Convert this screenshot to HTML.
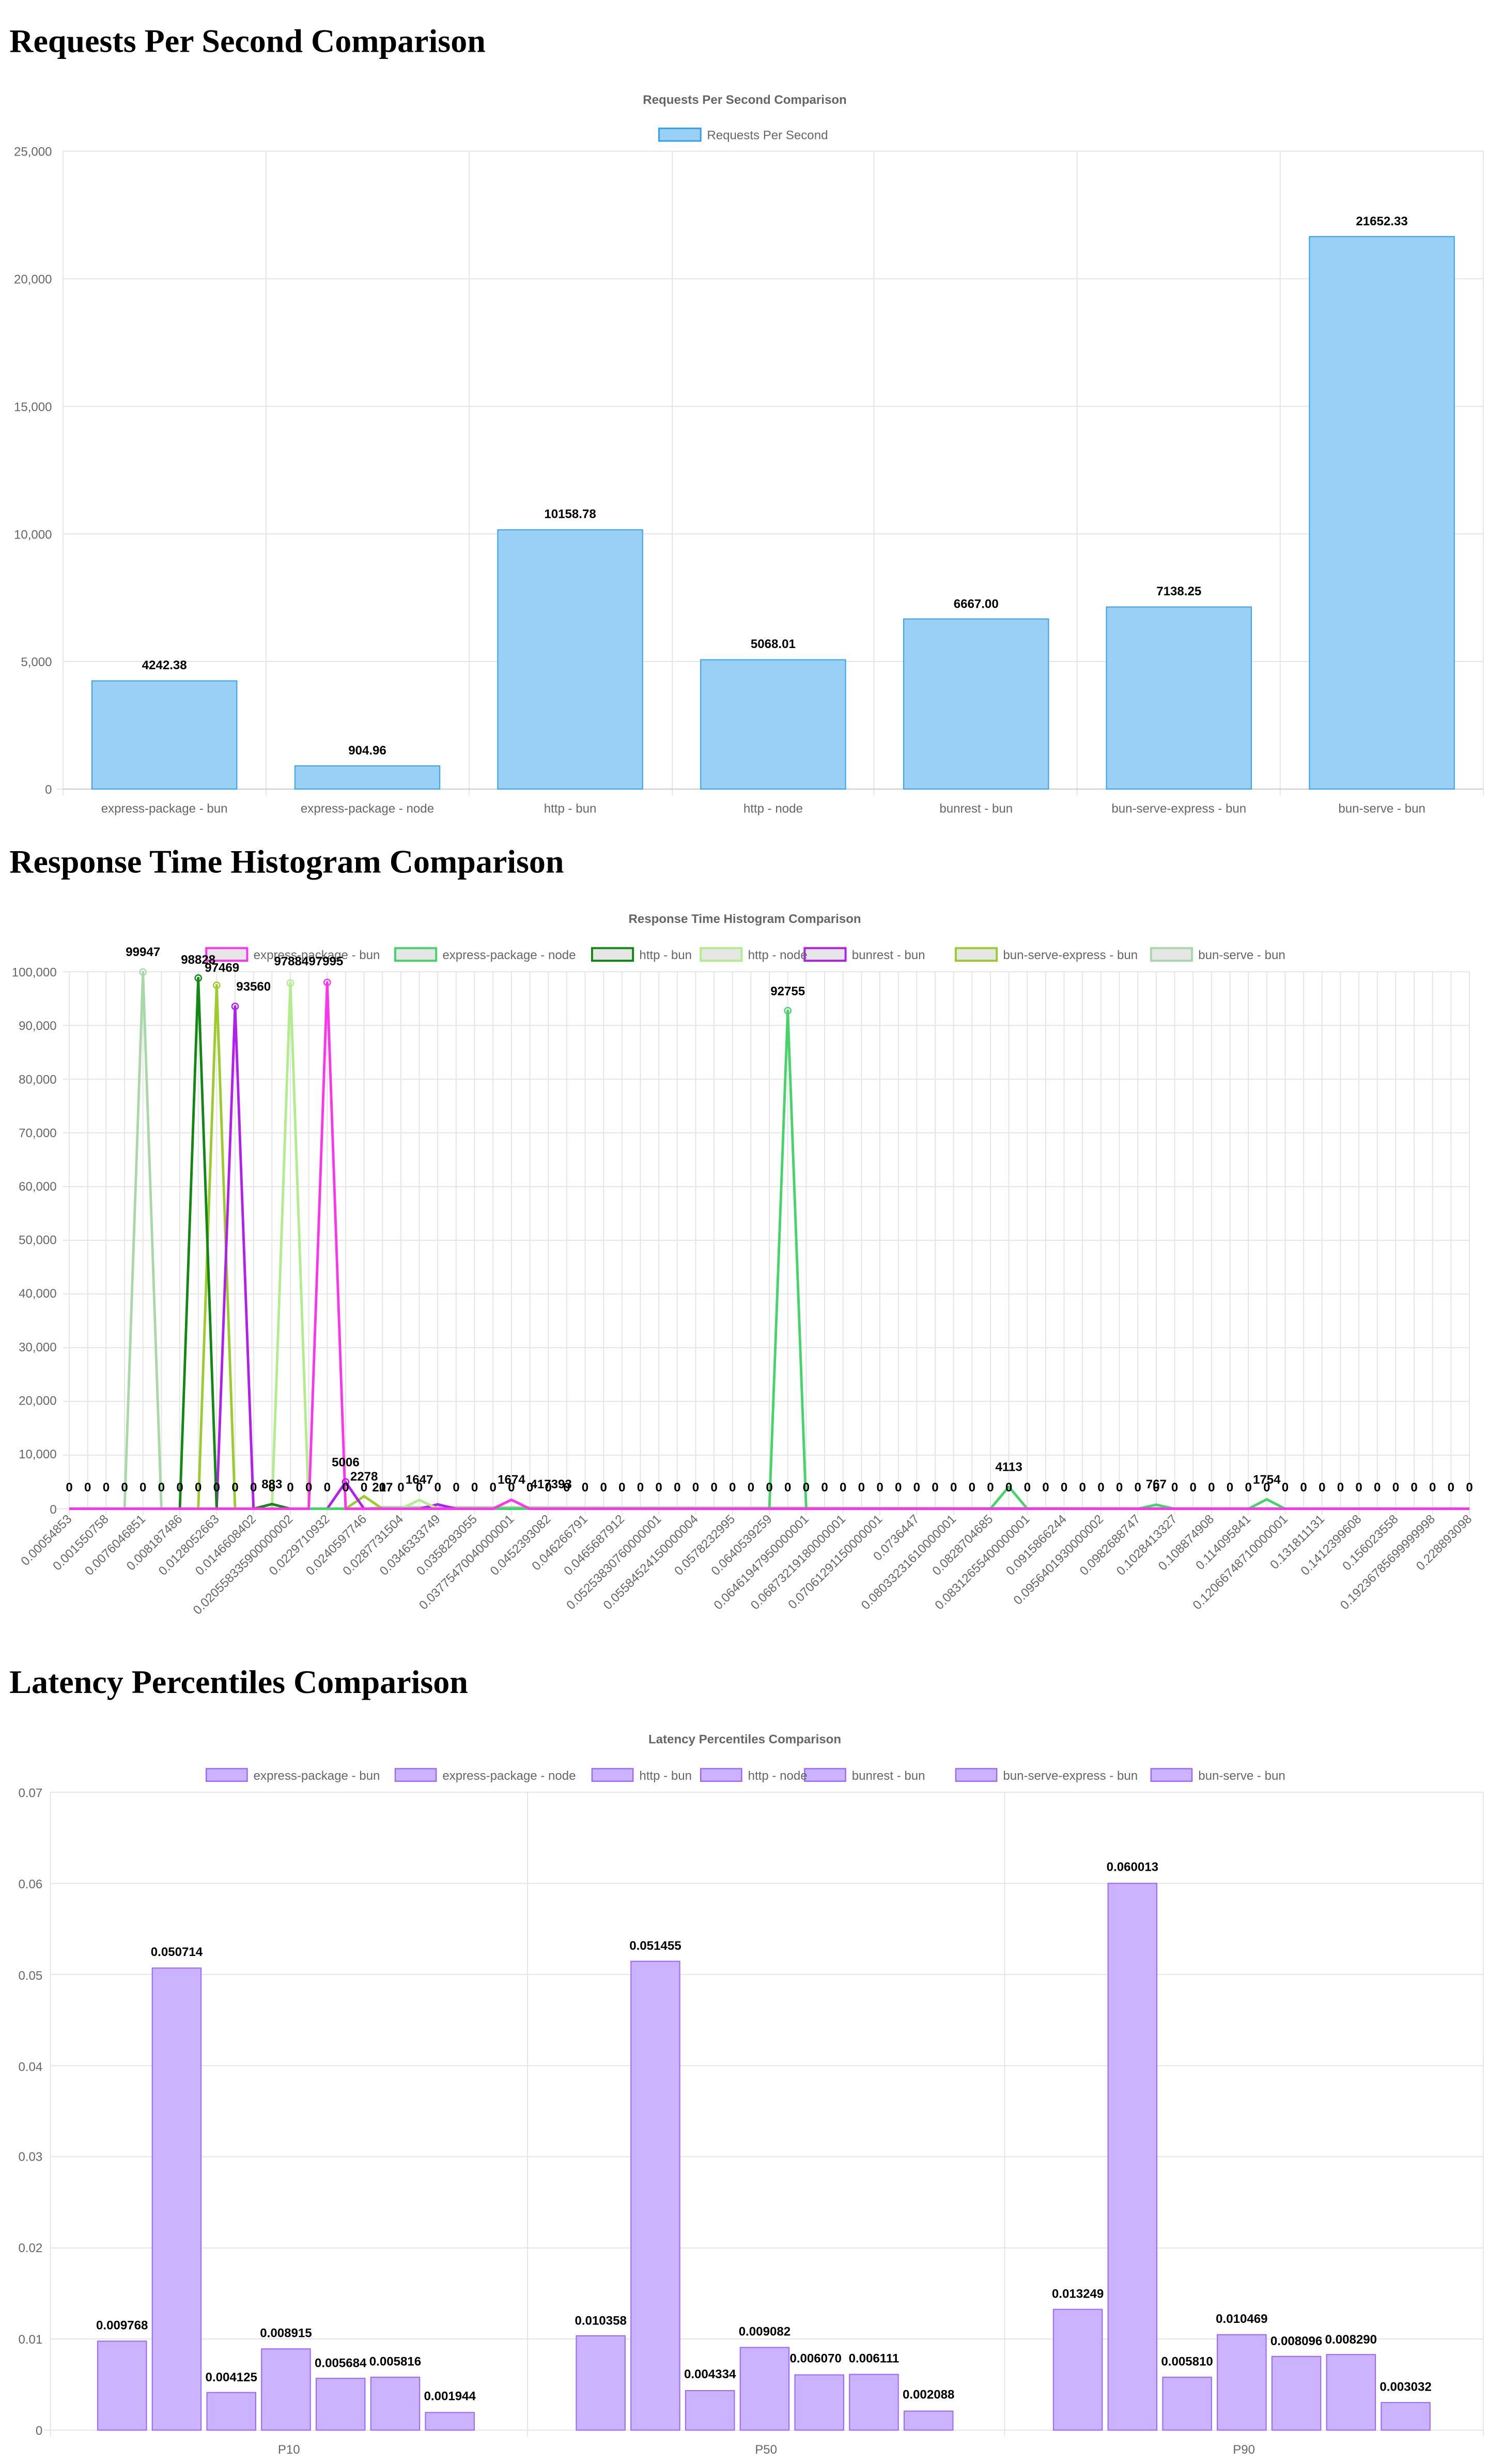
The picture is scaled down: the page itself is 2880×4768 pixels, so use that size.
<!DOCTYPE html>
<html><head><meta charset="utf-8"><style>
html,body{margin:0;padding:0;background:#fff;}
svg{display:block;}
.h{font-family:"Liberation Serif",serif;font-weight:bold;font-size:21px;fill:#000;}
.t{font-family:"Liberation Sans",sans-serif;font-weight:bold;font-size:7.9px;fill:#666;}
.l{font-family:"Liberation Sans",sans-serif;font-size:7.9px;fill:#666;}
.k{font-family:"Liberation Sans",sans-serif;font-size:7.9px;fill:#666;}
.d{font-family:"Liberation Sans",sans-serif;font-weight:bold;font-size:7.9px;fill:#000;}
.g{stroke:#e5e5e5;stroke-width:0.66;fill:none;}
</style></head><body>
<svg width="2880" height="4768" viewBox="0 0 945 1564.5" xmlns="http://www.w3.org/2000/svg">
<text class="h" x="6" y="33">Requests Per Second Comparison</text>
<text class="t" x="473" y="66" text-anchor="middle">Requests Per Second Comparison</text>
<rect x="418.5" y="81.5" width="26.5" height="8" fill="#9ad0f5" stroke="#36a2eb" stroke-width="1"/>
<text class="l" x="449" y="88.5">Requests Per Second</text>
<path class="g" d="M40 96H942M40 177H942M40 258H942M40 339H942M40 420H942M36 501H942M40 96V505M169 96V505M298 96V505M427 96V505M555 96V505M684 96V505M813 96V505M942 96V505"/>
<path d="M40 501H942" stroke="#ccc" stroke-width="0.66"/>
<g class="k" text-anchor="end">
<text x="33" y="99">25,000</text><text x="33" y="180">20,000</text><text x="33" y="261">15,000</text><text x="33" y="342">10,000</text><text x="33" y="423">5,000</text><text x="33" y="504">0</text>
</g>
<g fill="#9ad0f5" stroke="#36a2eb" stroke-width="0.66">
<rect x="58.4" y="432.3" width="92" height="68.7"/>
<rect x="187.3" y="486.3" width="92" height="14.7"/>
<rect x="316.1" y="336.4" width="92" height="164.6"/>
<rect x="445" y="418.9" width="92" height="82.1"/>
<rect x="573.9" y="393" width="92" height="108"/>
<rect x="702.7" y="385.4" width="92" height="115.6"/>
<rect x="831.6" y="150.2" width="92" height="350.8"/>
</g>
<g class="d" text-anchor="middle">
<text x="104.4" y="425">4242.38</text><text x="233.3" y="479">904.96</text><text x="362.1" y="329">10158.78</text><text x="491" y="411.5">5068.01</text><text x="619.9" y="386">6667.00</text><text x="748.7" y="378">7138.25</text><text x="877.6" y="143">21652.33</text>
</g>
<g class="k" text-anchor="middle">
<text x="104.4" y="516">express-package - bun</text><text x="233.3" y="516">express-package - node</text><text x="362.1" y="516">http - bun</text><text x="491" y="516">http - node</text><text x="619.9" y="516">bunrest - bun</text><text x="748.7" y="516">bun-serve-express - bun</text><text x="877.6" y="516">bun-serve - bun</text>
</g>

<text class="h" x="6" y="554">Response Time Histogram Comparison</text>
<text class="t" x="473" y="586" text-anchor="middle">Response Time Histogram Comparison</text>
<g stroke-width="1.3" fill="#e6e6e6">
<rect x="131" y="602" width="26" height="8" stroke="#ff33ee"/>
<rect x="251" y="602" width="26" height="8" stroke="#44d46a"/>
<rect x="376" y="602" width="26" height="8" stroke="#118811"/>
<rect x="445" y="602" width="26" height="8" stroke="#b2ec8c"/>
<rect x="511" y="602" width="26" height="8" stroke="#b31ef0"/>
<rect x="607" y="602" width="26" height="8" stroke="#9ccc2c"/>
<rect x="731" y="602" width="26" height="8" stroke="#a8d8a8"/>
</g>
<g class="l">
<text x="161" y="609">express-package - bun</text><text x="281" y="609">express-package - node</text><text x="406" y="609">http - bun</text><text x="475" y="609">http - node</text><text x="541" y="609">bunrest - bun</text><text x="637" y="609">bun-serve-express - bun</text><text x="761" y="609">bun-serve - bun</text>
</g>
<path class="g" d="M40 617H933M40 651.1H933M40 685.2H933M40 719.3H933M40 753.4H933M40 787.5H933M40 821.6H933M40 855.7H933M40 889.8H933M40 923.9H933M36 958H933
M44 617V962M55.7 617V958M67.4 617V962M79.1 617V958M90.8 617V962M102.5 617V958M114.2 617V962M125.9 617V958M137.6 617V962M149.3 617V958M161 617V962M172.7 617V958M184.4 617V962M196.1 617V958M207.8 617V962M219.5 617V958M231.2 617V962M242.9 617V958M254.6 617V962M266.3 617V958M278 617V962M289.7 617V958M301.4 617V962M313.1 617V958M324.8 617V962M336.5 617V958M348.2 617V962M359.9 617V958M371.6 617V962M383.3 617V958M395 617V962M406.7 617V958M418.4 617V962M430.1 617V958M441.8 617V962M453.5 617V958M465.2 617V962M476.9 617V958M488.6 617V962M500.3 617V958M512 617V962M523.7 617V958M535.4 617V962M547.1 617V958M558.8 617V962M570.5 617V958M582.2 617V962M593.9 617V958M605.6 617V962M617.3 617V958M629 617V962M640.7 617V958M652.4 617V962M664.1 617V958M675.8 617V962M687.5 617V958M699.2 617V962M710.9 617V958M722.6 617V962M734.3 617V958M746 617V962M757.7 617V958M769.4 617V962M781.1 617V958M792.8 617V962M804.5 617V958M816.2 617V962M827.9 617V958M839.6 617V962M851.3 617V958M863 617V962M874.7 617V958M886.4 617V962M898.1 617V958M909.8 617V962M921.5 617V958M933.2 617V962"/>
<g class="k" text-anchor="end">
<text x="36" y="620">100,000</text><text x="36" y="654">90,000</text><text x="36" y="688">80,000</text><text x="36" y="722">70,000</text><text x="36" y="756">60,000</text><text x="36" y="790">50,000</text><text x="36" y="824">40,000</text><text x="36" y="858">30,000</text><text x="36" y="892">20,000</text><text x="36" y="926">10,000</text><text x="36" y="961">0</text>
</g>
<g fill="none" stroke-width="1.6" stroke-linejoin="round">
<polyline stroke="#a8d8a8" points="44,958 79.1,958 90.8,617.2 102.5,958 223,958 231.2,958 242.9,957 933.2,958"/>
<polyline stroke="#9ccc2c" points="44,958 125.9,958 137.6,625.6 149.3,958 219.5,958 231.2,950 242.9,958 933.2,958"/>
<polyline stroke="#b31ef0" points="44,958 137.6,958 149.3,639 161,958 207.8,958 219.5,941 231.2,958 266.3,958 278,955.2 289.7,958 933.2,958"/>
<polyline stroke="#b2ec8c" points="44,958 172.7,958 184.4,624.2 196.1,958 254.6,958 266.3,952.4 278,958 933.2,958"/>
<polyline stroke="#118811" points="44,958 114.2,958 125.9,621 137.6,958 161,958 172.7,955 184.4,958 933.2,958"/>
<polyline stroke="#44d46a" points="44,958 488.6,958 500.3,641.7 512,958 629,958 640.7,944 652.4,958 722.6,958 734.3,955.4 746,958 792.8,958 804.5,952 816.2,958 933.2,958"/>
<polyline stroke="#ff33ee" points="44,958 196.1,958 207.8,623.8 219.5,958 313.1,958 324.8,952.3 336.5,958 933.2,958"/>
</g>
<g fill="none" stroke-width="0.8">
<circle cx="90.8" cy="617.2" r="2" stroke="#a8d8a8"/><circle cx="125.9" cy="621" r="2" stroke="#118811"/><circle cx="137.6" cy="625.6" r="2" stroke="#9ccc2c"/><circle cx="149.3" cy="639" r="2" stroke="#b31ef0"/><circle cx="184.4" cy="624.2" r="2" stroke="#b2ec8c"/><circle cx="207.8" cy="623.8" r="2" stroke="#ff33ee"/><circle cx="500.3" cy="641.7" r="2" stroke="#44d46a"/><circle cx="219.5" cy="941" r="2" stroke="#b31ef0"/>
</g>
<text class="d" x="44 55.7 67.4 79.1 90.8 102.5 114.2 125.9 137.6 149.3 161 172.7 184.4 196.1 207.8 219.5 231.2 242.9 254.6 266.3 278 289.7 301.4 313.1 324.8 336.5 348.2 359.9 371.6 383.3 395 406.7 418.4 430.1 441.8 453.5 465.2 476.9 488.6 500.3 512 523.7 535.4 547.1 558.8 570.5 582.2 593.9 605.6 617.3 629 640.7 652.4 664.1 675.8 687.5 699.2 710.9 722.6 734.3 746 757.7 769.4 781.1 792.8 804.5 816.2 827.9 839.6 851.3 863 874.7 886.4 898.1 909.8 921.5 933.2" y="947" text-anchor="middle">00000000000000000000000000000000000000000000000000000000000000000000000000000</text>
<g class="d" text-anchor="middle">
<text x="90.8" y="607">99947</text><text x="125.9" y="612">98828</text><text x="141" y="617">97469</text><text x="161" y="629">93560</text><text x="196" y="613">9788497995</text><text x="500.3" y="632">92755</text>
<text x="219.5" y="931">5006</text><text x="231.2" y="940">2278</text><text x="172.7" y="945">883</text><text x="266.3" y="942">1647</text><text x="324.8" y="942">1674</text><text x="640.7" y="934">4113</text><text x="804.5" y="942">1754</text><text x="734.3" y="945">767</text><text x="350" y="945">417393</text><text x="242.9" y="947">217</text>
</g>
<g class="k" text-anchor="end">
<text transform="translate(46,965) rotate(-45)">0.00054853</text>
<text transform="translate(69.4,965) rotate(-45)">0.001550758</text>
<text transform="translate(92.8,965) rotate(-45)">0.0076046851</text>
<text transform="translate(116.2,965) rotate(-45)">0.008187486</text>
<text transform="translate(139.6,965) rotate(-45)">0.0128052663</text>
<text transform="translate(163,965) rotate(-45)">0.0146608402</text>
<text transform="translate(186.4,965) rotate(-45)">0.020558335900000002</text>
<text transform="translate(209.8,965) rotate(-45)">0.0229710932</text>
<text transform="translate(233.2,965) rotate(-45)">0.0240597746</text>
<text transform="translate(256.6,965) rotate(-45)">0.0287731504</text>
<text transform="translate(280,965) rotate(-45)">0.0346333749</text>
<text transform="translate(303.4,965) rotate(-45)">0.0358293055</text>
<text transform="translate(326.8,965) rotate(-45)">0.03775470040000001</text>
<text transform="translate(350.2,965) rotate(-45)">0.0452393082</text>
<text transform="translate(373.6,965) rotate(-45)">0.046266791</text>
<text transform="translate(397,965) rotate(-45)">0.0465687912</text>
<text transform="translate(420.4,965) rotate(-45)">0.05253830760000001</text>
<text transform="translate(443.8,965) rotate(-45)">0.05584524150000004</text>
<text transform="translate(467.2,965) rotate(-45)">0.0578232995</text>
<text transform="translate(490.6,965) rotate(-45)">0.0640539259</text>
<text transform="translate(514,965) rotate(-45)">0.06461947950000001</text>
<text transform="translate(537.4,965) rotate(-45)">0.06873219180000001</text>
<text transform="translate(560.8,965) rotate(-45)">0.07061291150000001</text>
<text transform="translate(584.2,965) rotate(-45)">0.0736447</text>
<text transform="translate(607.6,965) rotate(-45)">0.08033231610000001</text>
<text transform="translate(631,965) rotate(-45)">0.0828704685</text>
<text transform="translate(654.4,965) rotate(-45)">0.08312655400000001</text>
<text transform="translate(677.8,965) rotate(-45)">0.0915866244</text>
<text transform="translate(701.2,965) rotate(-45)">0.0956401930000002</text>
<text transform="translate(724.6,965) rotate(-45)">0.0982688747</text>
<text transform="translate(748,965) rotate(-45)">0.1028413327</text>
<text transform="translate(771.4,965) rotate(-45)">0.108874908</text>
<text transform="translate(794.8,965) rotate(-45)">0.114095841</text>
<text transform="translate(818.2,965) rotate(-45)">0.12066748710000001</text>
<text transform="translate(841.6,965) rotate(-45)">0.131811131</text>
<text transform="translate(865,965) rotate(-45)">0.1412399608</text>
<text transform="translate(888.4,965) rotate(-45)">0.156023558</text>
<text transform="translate(911.8,965) rotate(-45)">0.19236785699999998</text>
<text transform="translate(935.2,965) rotate(-45)">0.228893098</text>
</g>

<text class="h" x="6" y="1075">Latency Percentiles Comparison</text>
<text class="t" x="473" y="1107" text-anchor="middle">Latency Percentiles Comparison</text>
<g stroke-width="0.8" fill="#ccb3ff" stroke="#9966ff">
<rect x="131" y="1123" width="26" height="8"/><rect x="251" y="1123" width="26" height="8"/><rect x="376" y="1123" width="26" height="8"/><rect x="445" y="1123" width="26" height="8"/><rect x="511" y="1123" width="26" height="8"/><rect x="607" y="1123" width="26" height="8"/><rect x="731" y="1123" width="26" height="8"/>
</g>
<g class="l">
<text x="161" y="1130">express-package - bun</text><text x="281" y="1130">express-package - node</text><text x="406" y="1130">http - bun</text><text x="475" y="1130">http - node</text><text x="541" y="1130">bunrest - bun</text><text x="637" y="1130">bun-serve-express - bun</text><text x="761" y="1130">bun-serve - bun</text>
</g>
<path class="g" d="M32 1138H942M32 1195.9H942M32 1253.7H942M32 1311.6H942M32 1369.4H942M32 1427.3H942M32 1485.1H942M28 1543H942M32 1138V1547M335 1138V1547M638 1138V1547M942 1138V1547"/>
<g class="k" text-anchor="end">
<text x="27" y="1141">0.07</text><text x="27" y="1199">0.06</text><text x="27" y="1257">0.05</text><text x="27" y="1315">0.04</text><text x="27" y="1372">0.03</text><text x="27" y="1430">0.02</text><text x="27" y="1488">0.01</text><text x="27" y="1546">0</text>
</g>
<g fill="#ccb3ff" stroke="#9966ff" stroke-width="0.66">
<rect x="62" y="1486.5" width="31" height="56.5"/><rect x="96.7" y="1249.6" width="31" height="293.4"/><rect x="131.4" y="1519.1" width="31" height="23.9"/><rect x="166.1" y="1491.4" width="31" height="51.6"/><rect x="200.8" y="1510.1" width="31" height="32.9"/><rect x="235.5" y="1509.4" width="31" height="33.6"/><rect x="270.2" y="1531.8" width="31" height="11.2"/>
<rect x="366" y="1483.1" width="31" height="59.9"/><rect x="400.7" y="1245.3" width="31" height="297.7"/><rect x="435.4" y="1517.9" width="31" height="25.1"/><rect x="470.1" y="1490.5" width="31" height="52.5"/><rect x="504.8" y="1507.9" width="31" height="35.1"/><rect x="539.5" y="1507.6" width="31" height="35.4"/><rect x="574.2" y="1530.9" width="31" height="12.1"/>
<rect x="669" y="1466.3" width="31" height="76.7"/><rect x="703.7" y="1195.8" width="31" height="347.2"/><rect x="738.4" y="1509.4" width="31" height="33.6"/><rect x="773.1" y="1482.4" width="31" height="60.6"/><rect x="807.8" y="1496.2" width="31" height="46.8"/><rect x="842.5" y="1495" width="31" height="48"/><rect x="877.2" y="1525.5" width="31" height="17.5"/>
</g>
<g class="d" text-anchor="middle">
<text x="77.5" y="1479">0.009768</text><text x="112.2" y="1242">0.050714</text><text x="146.9" y="1512">0.004125</text><text x="181.6" y="1484">0.008915</text><text x="216.3" y="1503">0.005684</text><text x="251" y="1502">0.005816</text><text x="285.7" y="1524">0.001944</text>
<text x="381.5" y="1476">0.010358</text><text x="416.2" y="1238">0.051455</text><text x="450.9" y="1510">0.004334</text><text x="485.6" y="1483">0.009082</text><text x="518" y="1500">0.006070</text><text x="555" y="1500">0.006111</text><text x="589.7" y="1523">0.002088</text>
<text x="684.5" y="1459">0.013249</text><text x="719.2" y="1188">0.060013</text><text x="753.9" y="1502">0.005810</text><text x="788.6" y="1475">0.010469</text><text x="823.3" y="1489">0.008096</text><text x="858" y="1488">0.008290</text><text x="892.7" y="1518">0.003032</text>
</g>
<g class="k" text-anchor="middle">
<text x="183.5" y="1558">P10</text><text x="486.5" y="1558">P50</text><text x="790" y="1558">P90</text>
</g>
</svg>
</body></html>
